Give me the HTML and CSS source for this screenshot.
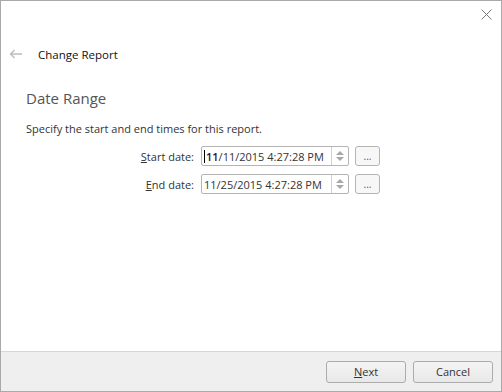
FILE: index.html
```html
<!DOCTYPE html>
<html lang="en">
<head>
  <meta charset="UTF-8" />
  <title>Change Report</title>
  <link rel="stylesheet" href="styles.css">
</head>
<body>
  <div class="dialog">

    <div class="titlebar">
      <svg class="close" width="11" height="11" viewBox="0 0 11 11">
        <path d="M0.5 0.5 L10.5 10.5 M10.5 0.5 L0.5 10.5" stroke="#7a7a7a" stroke-width="1" fill="none"/>
      </svg>
    </div>

    <!-- Header -->
    <div class="header">
      <svg class="back" width="13" height="10" viewBox="0 0 13 10">
        <path d="M13 5 H1.5 M5.5 1 L1.5 5 L5.5 9" stroke="#bdbdbd" stroke-width="1.4" fill="none"/>
      </svg>
      <span class="header-title">Change Report</span>
    </div>

    <!-- Contenuto -->
    <div class="content">
      <h2>Date Range</h2>
      <p class="hint">Specify the start and end times for this report.</p>

      <div class="row">
        <label><u>S</u>tart date:</label>
        <div class="datebox">
          <span class="value"><span class="caret"></span><span class="sel">11</span>/11/2015 4:27:28 PM</span>
          <div class="spin"><span class="up"></span><span class="down"></span></div>
        </div>
        <button class="more">...</button>
      </div>

      <div class="row">
        <label><u>E</u>nd date:</label>
        <div class="datebox">
          <span class="value">11/25/2015 4:27:28 PM</span>
          <div class="spin"><span class="up"></span><span class="down"></span></div>
        </div>
        <button class="more">...</button>
      </div>
    </div>

    <div class="footer">
      <button class="btn"><u>N</u>ext</button>
      <button class="btn">Cancel</button>
    </div>

  </div>
</body>
</html>
```

FILE: styles.css
```css
body {
  margin: 0;
  font-family: 'Open Sans', 'Noto Sans', sans-serif;
  color: #222;
}

.dialog {
  width: 502px;
  height: 392px;
  box-sizing: border-box;
  border: 1px solid #a9a9a9;
  background: #fff;
  display: flex;
  flex-direction: column;
}

.titlebar {
  height: 29px;
  display: flex;
  justify-content: flex-end;
  align-items: flex-start;
}

.close {
  margin-top: 8px;
  margin-right: 9px;
}

.header {
  height: 28px;
  margin-top: 10px;
  display: flex;
  align-items: center;
}

.back {
  margin-left: 8px;
  margin-right: 16px;
}

.header-title {
  font-size: 11.5px;
  color: #111;
}

.content {
  padding-left: 25px;
}

h2 {
  font-size: 15px;
  font-weight: 400;
  color: #555;
  margin: 20px 0 0;
  line-height: 20px;
}

.hint {
  font-size: 11px;
  color: #333;
  margin: 14px 0 10px;
  line-height: 14px;
}

.row {
  display: flex;
  align-items: center;
  height: 20px;
  margin-bottom: 8px;
}

label {
  width: 168px;
  text-align: right;
  padding-right: 7px;
  font-size: 11px;
  color: #333;
}

.datebox {
  width: 148px;
  height: 20px;
  box-sizing: border-box;
  border: 1px solid #b4b4b4;
  border-radius: 2px;
  display: flex;
  align-items: center;
}

.value {
  flex: 1;
  font-size: 11px;
  color: #333;
  padding-left: 2px;
  display: flex;
  align-items: center;
}

.caret {
  width: 1px;
  height: 13px;
  margin-right: 1px;
  background: #000;
}

.sel {
  color: #3c0f1c;
  font-weight: 600;
}

.spin {
  width: 16px;
  height: 18px;
  border-left: 1px solid #d0d0d0;
  display: flex;
  flex-direction: column;
  align-items: center;
  justify-content: center;
  gap: 2px;
}

.up, .down {
  width: 0;
  height: 0;
  border-left: 4px solid transparent;
  border-right: 4px solid transparent;
}

.up {
  border-bottom: 4px solid #a8a8a8;
}

.down {
  border-top: 4px solid #a8a8a8;
}

.more {
  margin-left: 6px;
  width: 25px;
  height: 20px;
  padding: 0;
  border: 1px solid #b4b4b4;
  border-radius: 3px;
  background: #f7f7f7;
  font-family: inherit;
  font-size: 10px;
  color: #555;
}

.footer {
  margin-top: auto;
  height: 39px;
  border-top: 1px solid #d6d6d6;
  background: #efefef;
  display: flex;
  justify-content: flex-end;
  align-items: center;
  gap: 7px;
  padding-right: 8px;
}

.btn {
  width: 80px;
  height: 22px;
  border: 1px solid #acacac;
  border-radius: 3px;
  background: linear-gradient(#f4f4f4, #e8e8e8);
  font-family: inherit;
  font-size: 11px;
  color: #333;
  padding: 0;
}
```
